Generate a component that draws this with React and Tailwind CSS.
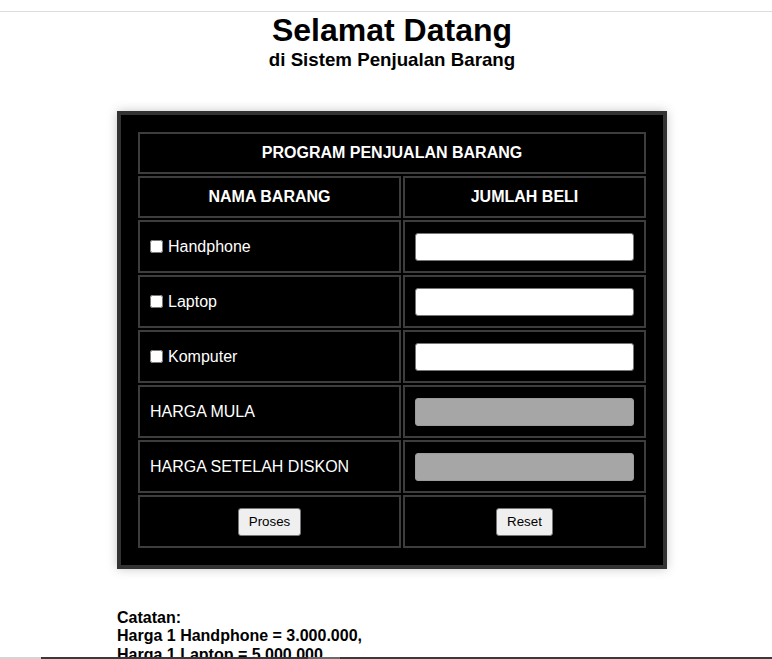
export default function App() {
  const font = "font-['Liberation_Sans',Arial,sans-serif]";
  const cell = "border-2 border-[#3d3d3d] bg-black text-white";
  const items = ["Handphone", "Laptop", "Komputer"];
  return (
    <div className={`relative w-[772px] h-[659px] overflow-hidden bg-white ${font}`}>
      <div className="w-[784px]">
        <div className="pt-[11px]">
          <div className="h-px w-[772px] bg-[#dcdcdc]" />
        </div>
        <h1 className="text-center text-[32px] font-bold leading-[37px] text-black">Selamat Datang</h1>
        <h3 className="text-center text-[18.72px] font-bold leading-[21px] text-black">di Sistem Penjualan Barang</h3>

        <div className="mx-auto mt-[41px] w-[550px] border-4 border-[#333333] bg-black p-[15px] shadow-[0_0_10px_rgba(0,0,0,0.22)]">
          <div className="grid grid-cols-[263px_243px] gap-[2px] p-[2px]">
            <div className={`${cell} col-span-2 h-[42px] flex items-center justify-center text-base font-bold`}>
              PROGRAM PENJUALAN BARANG
            </div>
            <div className={`${cell} h-[42px] flex items-center justify-center text-base font-bold`}>NAMA BARANG</div>
            <div className={`${cell} h-[42px] flex items-center justify-center text-base font-bold`}>JUMLAH BELI</div>

            {items.map((it) => [
              <div key={it + "l"} className={`${cell} h-[53px] flex items-center px-[10px] text-base`}>
                <input type="checkbox" className="m-0 mr-[5px] h-[13px] w-[13px]" />
                <span>{it}</span>
              </div>,
              <div key={it + "r"} className={`${cell} h-[53px] flex items-center px-[10px]`}>
                <input type="text" className="h-[28px] w-full rounded-[3px] border border-[#767676] bg-white px-1 text-black" />
              </div>,
            ])}

            <div className={`${cell} h-[53px] flex items-center px-[10px] text-base`}>HARGA MULA</div>
            <div className={`${cell} h-[53px] flex items-center px-[10px]`}>
              <input type="text" disabled className="h-[28px] w-full rounded-[3px] border border-[#9c9c9c] bg-[#a6a6a6]" />
            </div>
            <div className={`${cell} h-[53px] flex items-center px-[10px] text-base`}>HARGA SETELAH DISKON</div>
            <div className={`${cell} h-[53px] flex items-center px-[10px]`}>
              <input type="text" disabled className="h-[28px] w-full rounded-[3px] border border-[#9c9c9c] bg-[#a6a6a6]" />
            </div>

            <div className={`${cell} h-[53px] flex items-center justify-center`}>
              <button className="h-[28px] rounded-[3px] border border-[#767676] bg-[#efefef] px-[10px] text-[13.33px] leading-[16px] text-black">
                Proses
              </button>
            </div>
            <div className={`${cell} h-[53px] flex items-center justify-center`}>
              <button className="h-[28px] rounded-[3px] border border-[#767676] bg-[#efefef] px-[10px] text-[13.33px] leading-[16px] text-black">
                Reset
              </button>
            </div>
          </div>
        </div>

        <div className="mx-auto mt-[40px] w-[550px] text-base font-bold leading-[18.4px] text-black">
          <p>Catatan:</p>
          <p>Harga 1 Handphone = 3.000.000,</p>
          <p>Harga 1 Laptop = 5.000.000</p>
          <p>Harga 1 Komputer = 7.000.000</p>
        </div>
      </div>

      <div className="absolute bottom-0 left-0 flex h-[2px] w-full">
        <div className="w-[41px] bg-[#d4d4d4]" />
        <div className="w-[267px] bg-[#3a3a3a]" />
        <div className="w-[32px] bg-[#6b6b6b]" />
        <div className="flex-1 bg-[#3a3a3a]" />
      </div>
    </div>
  );
}
